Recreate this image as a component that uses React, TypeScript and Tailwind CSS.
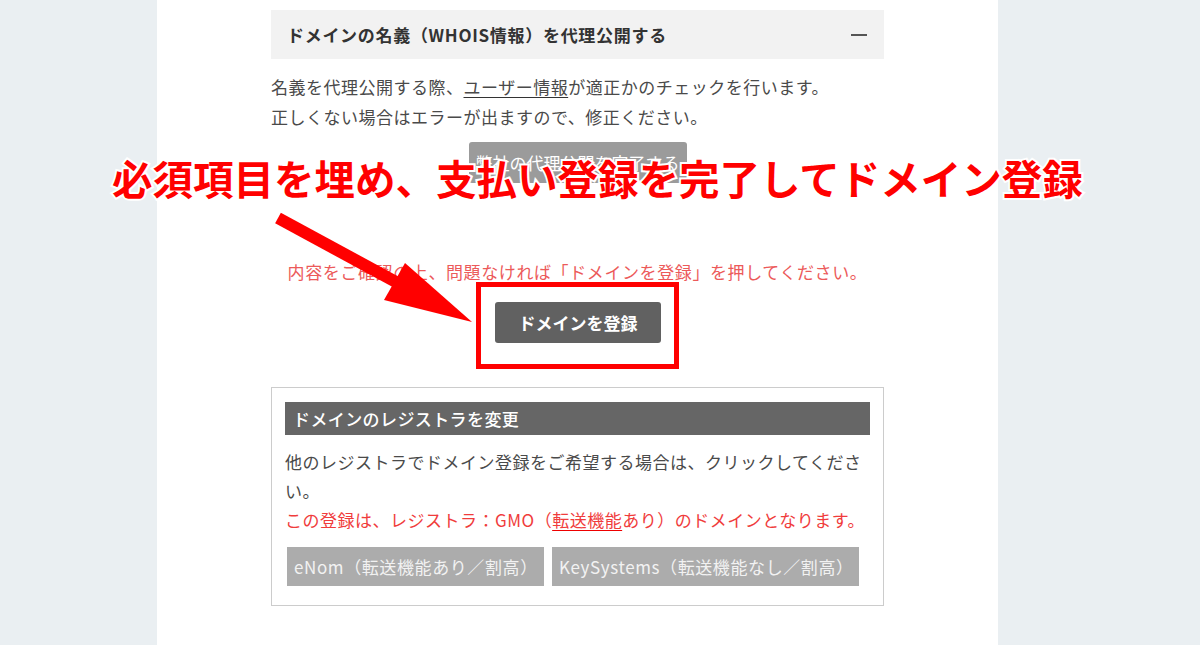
export default function App() {
  return (
    <div className="relative h-[645px] w-[1200px] overflow-hidden bg-[#eaeff2] [font-family:'Noto_Sans_CJK_JP',sans-serif]">
      <div className="ml-[157px] h-[645px] w-[841px] bg-white pl-[114px] pt-[10px]">
        <div className="w-[613px]">
          {/* WHOIS accordion */}
          <div className="flex h-[49px] items-center justify-between bg-[#f2f2f2] pl-[16px] pr-[17px]">
            <span className="text-[17px] font-bold tracking-[0.7px] text-[#333]">ドメインの名義（WHOIS情報）を代理公開する</span>
            <span className="block h-[2px] w-[16px] bg-[#555]" />
          </div>
          <p className="mt-[13px] text-[17px] leading-[30px] tracking-[0.5px] text-[#4a4a4a]">
            名義を代理公開する際、<span className="underline decoration-[#333] underline-offset-[3px]">ユーザー情報</span>が適正かのチェックを行います。
            <br />
            正しくない場合はエラーが出ますので、修正ください。
          </p>
          <div className="mt-[10px] flex justify-center">
            <button className="h-[41px] w-[218px] rounded-[3px] bg-[#9b9b9b] text-[17px] text-white">弊社の代理公開を完了する</button>
          </div>

          <p className="mt-[79px] text-center text-[17px] leading-[20px] tracking-[0.6px] text-[#ec5a5a]">
            内容をご確認の上、問題なければ「ドメインを登録」を押してください。
          </p>
          <div className="flex justify-center">
            <div className="border-[5px] border-[#ff0000] pb-[21px] pl-[14px] pr-[13px] pt-[15px]">
              <button className="h-[41px] w-[166px] rounded-[3px] bg-[#616161] text-[17px] font-bold text-white">ドメインを登録</button>
            </div>
          </div>

          {/* registrar change */}
          <div className="mt-[18px] border border-[#cccccc] px-[13px] pb-[19px] pt-[14px]">
            <div className="flex h-[33px] items-center bg-[#666666] pl-[8px] text-[17px] font-medium tracking-[0.4px] text-white">ドメインのレジストラを変更</div>
            <p className="mt-[12px] text-[17px] leading-[29px] tracking-[0.5px] text-[#4a4a4a]">
              他のレジストラでドメイン登録をご希望する場合は、クリックしてくださ
              <br />
              い。
              <br />
              <span className="text-[#f03c3c]">
                この登録は、レジストラ：GMO（<span className="underline decoration-[#e00] underline-offset-[3px]">転送機能</span>あり）のドメインとなります。
              </span>
            </p>
            <div className="mt-[13px] flex gap-[8px] pl-[2px]">
              <button className="h-[39px] w-[257px] bg-[#acacac] pl-[7px] text-left text-[17px] tracking-[0.6px] text-[#f2f2f2]">eNom（転送機能あり／割高）</button>
              <button className="h-[39px] w-[307px] bg-[#acacac] pl-[7px] text-left text-[17px] tracking-[0.6px] text-[#f2f2f2]">KeySystems（転送機能なし／割高）</button>
            </div>
          </div>
        </div>
      </div>

      {/* annotation overlay */}
      <div className="pointer-events-none absolute left-[112px] top-[158px] whitespace-nowrap text-[40.5px] font-bold leading-none text-[#ff0000] [-webkit-text-stroke:4px_white] [paint-order:stroke_fill]">
        必須項目を埋め、支払い登録を完了してドメイン登録
      </div>
      <svg className="pointer-events-none absolute left-0 top-0" width="1200" height="645" viewBox="0 0 1200 645">
        <line x1="278" y1="218" x2="396" y2="282" stroke="#ff0000" strokeWidth="12" />
        <polygon points="405,263 384,300 472,322" fill="#ff0000" />
      </svg>
    </div>
  );
}
